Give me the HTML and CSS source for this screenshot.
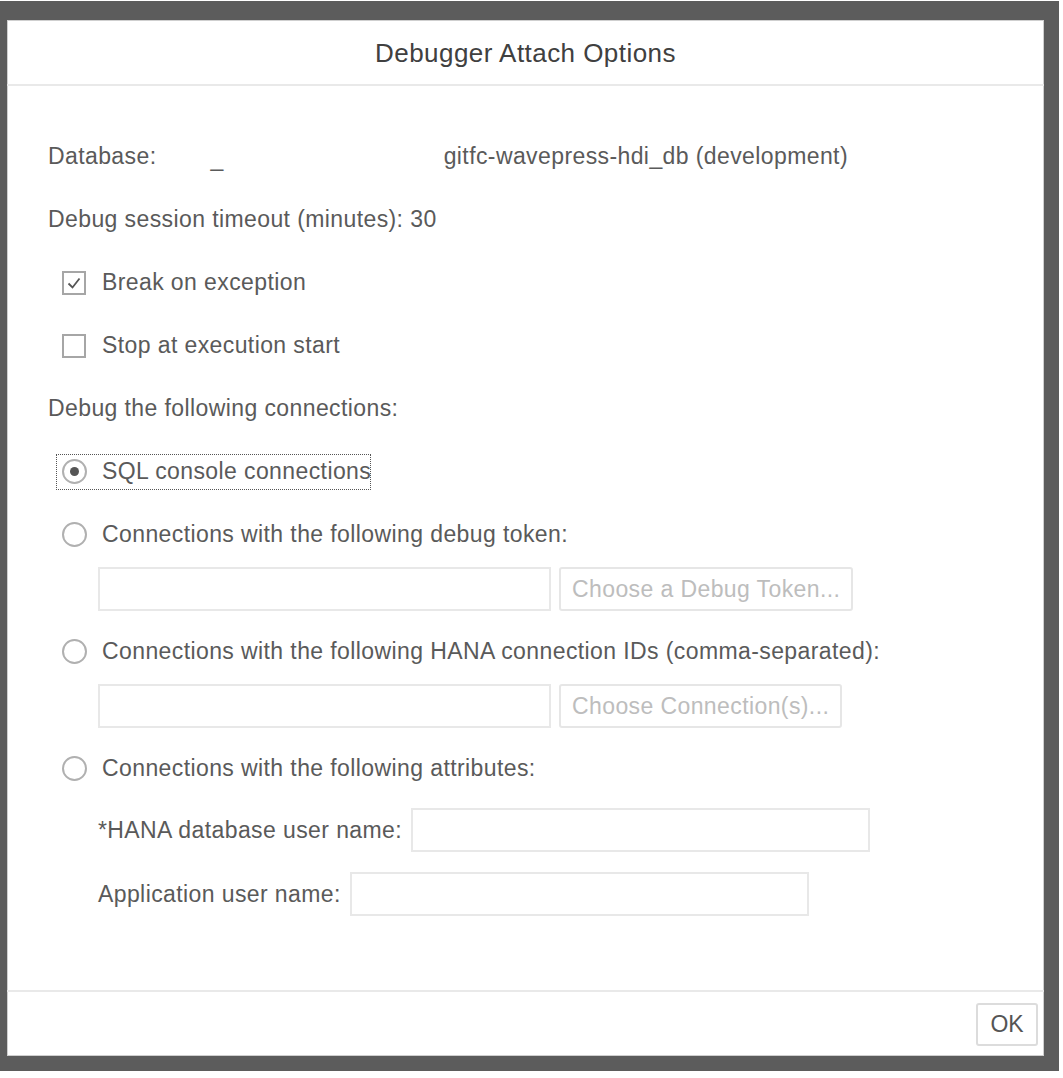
FILE: index.html
```html
<!DOCTYPE html>
<html>
<head>
<meta charset="utf-8">
<title>Debugger Attach Options</title>
<link rel="stylesheet" href="styles.css">
</head>
<body>
<div class="frame">
  <div class="dialog">
    <div class="header">
      <div class="title">Debugger Attach Options</div>
    </div>
    <div class="content">
      <div class="row">
        <span>Database:</span>
        <span class="redact">_</span>
        <span class="dbname">gitfc-wavepress-hdi_db (development)</span>
      </div>
      <div class="row">Debug session timeout (minutes): 30</div>
      <div class="row opt">
        <span class="check checked">
          <svg width="18" height="18" viewBox="0 0 18 18"><path d="M3.5 9.5 L7.5 13.5 L14.5 4.5" fill="none" stroke="#555" stroke-width="1.8"/></svg>
        </span>
        <span>Break on exception</span>
      </div>
      <div class="row opt">
        <span class="check"></span>
        <span>Stop at execution start</span>
      </div>
      <div class="row">Debug the following connections:</div>
      <div class="row opt">
        <span class="focus">
          <span class="radio on"><span class="dot"></span></span>
          <span>SQL console connections</span>
        </span>
      </div>
      <div class="row opt">
        <span class="radio"></span>
        <span>Connections with the following debug token:</span>
      </div>
      <div class="field-row">
        <span class="input wide"></span>
        <span class="btn disabled">Choose a Debug Token...</span>
      </div>
      <div class="row opt gap-top">
        <span class="radio"></span>
        <span>Connections with the following HANA connection IDs (comma-separated):</span>
      </div>
      <div class="field-row">
        <span class="input wide"></span>
        <span class="btn disabled">Choose Connection(s)...</span>
      </div>
      <div class="row opt gap-top">
        <span class="radio"></span>
        <span>Connections with the following attributes:</span>
      </div>
      <div class="attr-row first">
        <span>*HANA database user name:</span>
        <span class="input attr"></span>
      </div>
      <div class="attr-row second">
        <span>Application user name:</span>
        <span class="input attr"></span>
      </div>
    </div>
    <div class="footer">
      <span class="btn ok">OK</span>
    </div>
  </div>
</div>
</body>
</html>
```
FILE: styles.css
```css
html, body {
  margin: 0;
  padding: 0;
  background: #ffffff;
}
body {
  font-family: "Liberation Sans", Arial, sans-serif;
  color: #5a5a5a;
  width: 1063px;
  height: 1078px;
  overflow: hidden;
}
.frame {
  margin-top: 1px;
  width: 1059px;
  height: 1070px;
  box-sizing: border-box;
  background: #5c5c5c;
  border-top: 19px solid #5c5c5c;
  border-left: 7px solid #5c5c5c;
  border-right: 15px solid #5c5c5c;
  border-bottom: 15px solid #5c5c5c;
}
.dialog {
  background: #fff;
  width: 100%;
  height: 100%;
  display: flex;
  flex-direction: column;
  box-shadow: inset 0 0 0 1px #cfcfcf;
}
.header {
  height: 64px;
  border-bottom: 2px solid #e9e9e9;
  display: flex;
  align-items: center;
  justify-content: center;
  flex: none;
}
.title {
  font-size: 26px;
  letter-spacing: 0.45px;
  color: #404040;
  padding-top: 2px;
}
.content {
  flex: 1;
  padding: 39px 0 0 41px;
  font-size: 23px;
  letter-spacing: 0.4px;
}
.row {
  height: 63px;
  display: flex;
  align-items: center;
  white-space: nowrap;
}
.row.opt {
  padding-left: 14px;
}
.gap-top {
  margin-top: 10px;
}
.redact {
  margin-left: 54px;
  position: relative;
  top: 2px;
}
.dbname {
  margin-left: 220px;
}
.check {
  width: 24px;
  height: 24px;
  box-sizing: border-box;
  border: 2px solid #a6a6a6;
  margin-right: 16px;
  display: flex;
  align-items: center;
  justify-content: center;
  flex: none;
}
.radio {
  width: 25px;
  height: 25px;
  box-sizing: border-box;
  border: 2px solid #b0b0b0;
  border-radius: 50%;
  margin-right: 15px;
  display: flex;
  align-items: center;
  justify-content: center;
  flex: none;
}
.radio .dot {
  width: 9px;
  height: 9px;
  border-radius: 50%;
  background: #555;
}
.focus {
  display: flex;
  align-items: center;
  border: 1px dotted #555;
  margin-left: -6px;
  padding: 4px 0 4px 5px;
  height: 36px;
  box-sizing: border-box;
  width: 315px;
}
.field-row {
  display: flex;
  padding-left: 50px;
  gap: 8px;
  height: 43px;
  margin-top: 1px;
}
.input {
  display: block;
  box-sizing: border-box;
  border: 2px solid #e8e8e8;
  background: #fff;
  height: 44px;
}
.input.wide {
  width: 453px;
}
.btn {
  display: flex;
  align-items: center;
  box-sizing: border-box;
  border: 2px solid #e6e6e6;
  border-radius: 3px;
  padding: 0 11px;
  white-space: nowrap;
}
.btn.disabled {
  color: #bdbdbd;
  height: 44px;
}
.attr-row {
  display: flex;
  align-items: center;
  padding-left: 50px;
  white-space: nowrap;
  height: 44px;
}
.attr-row.first {
  margin-top: 8px;
}
.attr-row.second {
  margin-top: 20px;
}
.attr-row .input {
  margin-left: 9px;
}
.input.attr {
  width: 459px;
}
.footer {
  flex: none;
  height: 66px;
  border-top: 2px solid #e9e9e9;
  box-sizing: border-box;
  display: flex;
  align-items: center;
  justify-content: flex-end;
  padding-right: 6px;
}
.btn.ok {
  height: 43px;
  width: 62px;
  justify-content: center;
  padding: 0;
  color: #555;
  border-color: #dcdcdc;
  font-size: 23px;
}
```
